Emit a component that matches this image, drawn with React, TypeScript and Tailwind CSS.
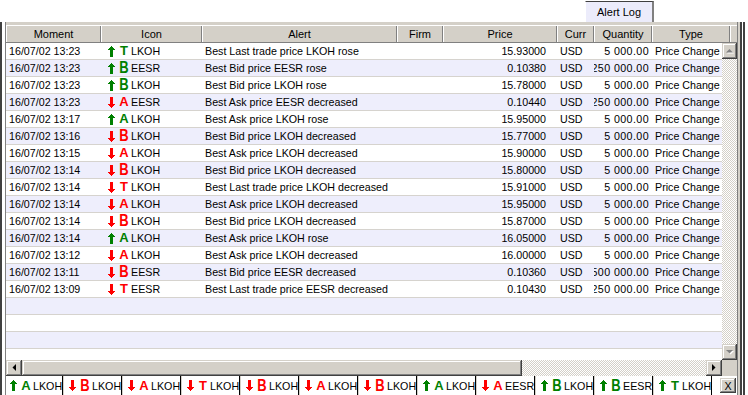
import React from 'react'

type Kind = 'A' | 'B' | 'T'

interface Row {
  time: string
  up: boolean
  kind: Kind
  sym: string
  alert: string
  price: string
  qty: string
}

const rows: Row[] = [
  { time: '16/07/02 13:23', up: true, kind: 'T', sym: 'LKOH', alert: 'Best Last trade price LKOH rose', price: '15.93000', qty: '5 000.00' },
  { time: '16/07/02 13:23', up: true, kind: 'B', sym: 'EESR', alert: 'Best Bid price EESR rose', price: '0.10380', qty: '250 000.00' },
  { time: '16/07/02 13:23', up: true, kind: 'B', sym: 'LKOH', alert: 'Best Bid price LKOH rose', price: '15.78000', qty: '5 000.00' },
  { time: '16/07/02 13:23', up: false, kind: 'A', sym: 'EESR', alert: 'Best Ask price EESR decreased', price: '0.10440', qty: '250 000.00' },
  { time: '16/07/02 13:17', up: true, kind: 'A', sym: 'LKOH', alert: 'Best Ask price LKOH rose', price: '15.95000', qty: '5 000.00' },
  { time: '16/07/02 13:16', up: false, kind: 'B', sym: 'LKOH', alert: 'Best Bid price LKOH decreased', price: '15.77000', qty: '5 000.00' },
  { time: '16/07/02 13:15', up: false, kind: 'A', sym: 'LKOH', alert: 'Best Ask price LKOH decreased', price: '15.90000', qty: '5 000.00' },
  { time: '16/07/02 13:14', up: false, kind: 'B', sym: 'LKOH', alert: 'Best Bid price LKOH decreased', price: '15.80000', qty: '5 000.00' },
  { time: '16/07/02 13:14', up: false, kind: 'T', sym: 'LKOH', alert: 'Best Last trade price LKOH decreased', price: '15.91000', qty: '5 000.00' },
  { time: '16/07/02 13:14', up: false, kind: 'A', sym: 'LKOH', alert: 'Best Ask price LKOH decreased', price: '15.95000', qty: '5 000.00' },
  { time: '16/07/02 13:14', up: false, kind: 'B', sym: 'LKOH', alert: 'Best Bid price LKOH decreased', price: '15.87000', qty: '5 000.00' },
  { time: '16/07/02 13:14', up: true, kind: 'A', sym: 'LKOH', alert: 'Best Ask price LKOH rose', price: '16.05000', qty: '5 000.00' },
  { time: '16/07/02 13:12', up: false, kind: 'A', sym: 'LKOH', alert: 'Best Ask price LKOH decreased', price: '16.00000', qty: '5 000.00' },
  { time: '16/07/02 13:11', up: false, kind: 'B', sym: 'EESR', alert: 'Best Bid price EESR decreased', price: '0.10360', qty: '500 000.00' },
  { time: '16/07/02 13:09', up: false, kind: 'T', sym: 'EESR', alert: 'Best Last trade price EESR decreased', price: '0.10430', qty: '250 000.00' },
]

const tabs: { up: boolean; kind: Kind; sym: string }[] = [
  { up: true, kind: 'A', sym: 'LKOH' },
  { up: false, kind: 'B', sym: 'LKOH' },
  { up: false, kind: 'A', sym: 'LKOH' },
  { up: false, kind: 'T', sym: 'LKOH' },
  { up: false, kind: 'B', sym: 'LKOH' },
  { up: false, kind: 'A', sym: 'LKOH' },
  { up: false, kind: 'B', sym: 'LKOH' },
  { up: true, kind: 'A', sym: 'LKOH' },
  { up: false, kind: 'A', sym: 'EESR' },
  { up: true, kind: 'B', sym: 'LKOH' },
  { up: true, kind: 'B', sym: 'EESR' },
  { up: true, kind: 'T', sym: 'LKOH' },
]

const headers = [
  { label: 'Moment', w: 'w-[95px]' },
  { label: 'Icon', w: 'w-[101px]' },
  { label: 'Alert', w: 'w-[195px]' },
  { label: 'Firm', w: 'w-[46px]' },
  { label: 'Price', w: 'w-[114px]' },
  { label: 'Curr', w: 'w-[37px]' },
  { label: 'Quantity', w: 'w-[58px]' },
  { label: 'Type', w: 'w-[78px]' },
]

const raised =
  'bg-[#d4d0c8] shadow-[inset_-1px_-1px_#404040,inset_1px_1px_#d4d0c8,inset_-2px_-2px_#808080,inset_2px_2px_#ffffff]'
const checker =
  'bg-[repeating-conic-gradient(#d4d0c8_0_25%,#ffffff_0_50%)] bg-size-[2px_2px]'

function Arrow({ up }: { up: boolean }) {
  return (
    <svg width="7" height="11" viewBox="0 0 7 11" shapeRendering="crispEdges" className="shrink-0">
      {up ? (
        <path d="M3 0h1v1h1v1h1v1h1v1H5v7H2V4H0V3h1V2h1V1h1z" fill="#008000" />
      ) : (
        <path d="M2 0h3v7h2v1h-1v1h-1v1h-1v1h-1v-1h-1v-1h-1v-1h-1v-1h2z" fill="#ff0000" />
      )}
    </svg>
  )
}

function AlertIcon({ up, kind, sym }: { up: boolean; kind: Kind; sym: string }) {
  const color = up ? 'text-[#008000]' : 'text-[#ff0000]'
  // the B bitmap is taller than A and T
  const shape = kind === 'B' ? 'scale-y-[1.2]' : ''
  return (
    <>
      <Arrow up={up} />
      <span className="ml-[3px] w-[12px] shrink-0 flex justify-center">
        <span className={`inline-block font-bold text-[13px] leading-[16px] ${shape} ${color}`}>{kind}</span>
      </span>
      <span className="ml-px">{sym}</span>
    </>
  )
}

function Tri({ dir, disabled }: { dir: 'up' | 'down' | 'left' | 'right'; disabled?: boolean }) {
  const pts = {
    up: '3.5,1 7,4.5 0,4.5',
    down: '0,1 7,1 3.5,4.5',
    left: '4,0 4,7 0.5,3.5',
    right: '0,0 0,7 3.5,3.5',
  }[dir]
  const vertical = dir === 'up' || dir === 'down'
  return (
    <svg width={vertical ? 8 : 5} height={vertical ? 6 : 8} viewBox={vertical ? '0 0 8 6' : '0 0 5 8'}>
      {disabled && <polygon points={pts} fill="#ffffff" transform="translate(1 1)" />}
      <polygon points={pts} fill={disabled ? '#808080' : '#000000'} />
    </svg>
  )
}

export default function App() {
  const blanks = [0, 1, 2]
  return (
    <div className="w-[748px] h-[395px] overflow-hidden bg-white text-[10.7px] leading-[16px] text-black font-['Liberation_Sans',Arial,sans-serif] flex flex-col">
      {/* window tab */}
      <div className="h-[22px] shrink-0 flex justify-end pr-[94px]">
        <div className="mt-px h-[21px] w-[69px] border-t border-[#404040] border-l border-l-white border-r-2 border-r-[#808080] bg-[#ececfb] flex items-center justify-center text-[11px]">
          Alert Log
        </div>
      </div>

      <div className="flex flex-1 min-h-0">
        {/* left frame */}
        <div className="w-[6px] shrink-0 border-l-2 border-l-[#404040] border-r border-r-[#808080] bg-white" />

        <div className="w-[731px] shrink-0 flex flex-col">
          <div className="h-[3px] bg-[#d4d0c8]" />

          {/* column headers */}
          <div className="h-[18px] flex bg-[#d4d0c8] border-t border-white border-b border-b-[#808080] text-[11px]">
            {headers.map((h) => (
              <div
                key={h.label}
                className={`${h.w} shrink-0 flex items-center justify-center border-l border-l-white border-r border-r-[#808080]`}
              >
                {h.label}
              </div>
            ))}
            <div className="flex-1 border-l border-l-white" />
          </div>

          {/* body */}
          <div className="h-[317px] flex">
            <div className="w-[716px] overflow-hidden flex flex-col">
              {rows.map((r, i) => (
                <div
                  key={i}
                  className={`h-[17px] shrink-0 flex border-b border-[#d6d3ce] whitespace-nowrap ${i % 2 ? 'bg-[#eeeefc]' : 'bg-white'}`}
                >
                  <div className="w-[95px] shrink-0 pl-[3px] flex items-center">{r.time}</div>
                  <div className="w-[101px] shrink-0 pl-[7px] flex items-center">
                    <AlertIcon up={r.up} kind={r.kind} sym={r.sym} />
                  </div>
                  <div className="w-[195px] shrink-0 pl-[3px] flex items-center overflow-hidden">{r.alert}</div>
                  <div className="w-[46px] shrink-0" />
                  <div className="w-[114px] shrink-0 pr-[11px] flex items-center justify-end">{r.price}</div>
                  <div className="w-[37px] shrink-0 pl-[3px] flex items-center">USD</div>
                  <div className="w-[58px] shrink-0 pr-[3px] flex items-center justify-end overflow-hidden">
                    <span className="shrink-0 tracking-[0.4px]">{r.qty}</span>
                  </div>
                  <div className="w-[78px] shrink-0 pl-[3px] flex items-center">Price Change</div>
                </div>
              ))}
              {blanks.map((b) => (
                <div
                  key={b}
                  className={`h-[17px] shrink-0 border-b border-[#d6d3ce] ${(rows.length + b) % 2 ? 'bg-[#eeeefc]' : 'bg-white'}`}
                />
              ))}
            </div>

            {/* vertical scrollbar */}
            <div className="w-[15px] flex flex-col">
              <div className={`h-[16px] flex items-center justify-center ${raised}`}>
                <Tri dir="up" disabled />
              </div>
              <div className={`flex-1 ${checker}`} />
              <div className={`h-[16px] flex items-center justify-center ${raised}`}>
                <Tri dir="down" disabled />
              </div>
            </div>
          </div>

          {/* horizontal scrollbar */}
          <div className="h-[16px] flex">
            <div className={`w-[16px] flex items-center justify-center ${raised}`}>
              <Tri dir="left" />
            </div>
            <div className={`w-[500px] ${raised}`} />
            <div className={`w-[184px] ${checker}`} />
            <div className={`w-[16px] flex items-center justify-center ${raised}`}>
              <Tri dir="right" />
            </div>
            <div className="flex-1 bg-[#d4d0c8]" />
          </div>

          {/* alert tabs */}
          <div className="h-[19px] flex bg-white">
            {tabs.map((t, i) => (
              <div
                key={i}
                className={`h-full shrink-0 flex items-center whitespace-nowrap border-r border-r-black ${
                  i === 0 ? 'w-[57px] pl-[4px]' : 'w-[59px] pl-[5px] border-l border-l-[#d4d0c8]'
                }`}
              >
                <AlertIcon up={t.up} kind={t.kind} sym={t.sym} />
              </div>
            ))}
            <div className="flex-1 flex justify-end items-start pt-[2px] pr-px">
              <div className={`w-[16px] h-[15px] flex items-center justify-center ${raised}`}>X</div>
            </div>
          </div>
        </div>

        {/* right frame */}
        <div className="w-[11px] shrink-0 flex">
          <div className="w-px bg-[#808080]" />
          <div className="w-[2px] bg-[#d4d0c8]" />
          <div className="w-[2px] bg-[#404040]" />
          <div className="w-px bg-white" />
          <div className="w-[2px] bg-[#404040]" />
          <div className="flex-1 bg-white" />
        </div>
      </div>
    </div>
  )
}
